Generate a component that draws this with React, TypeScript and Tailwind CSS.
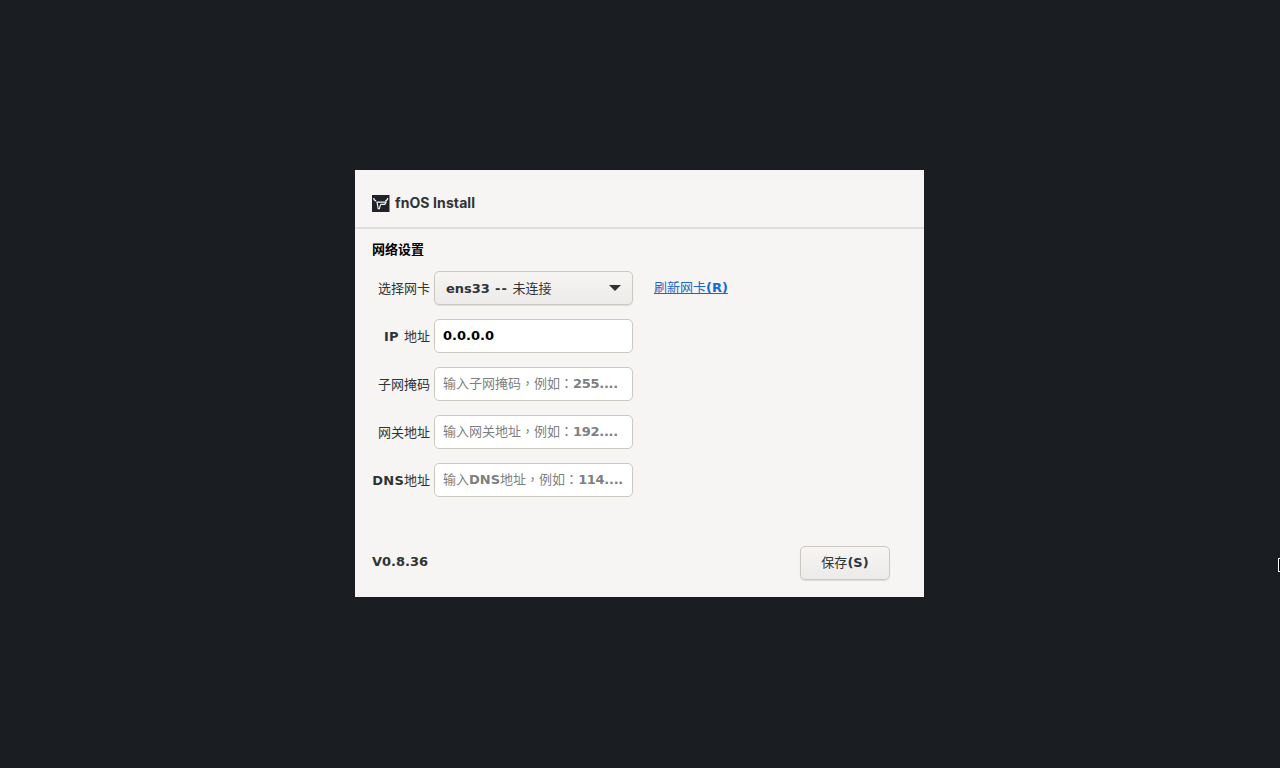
const cjk = "font-['DejaVu_Sans','Noto_Sans_CJK_SC',sans-serif]";

const fields = [
  { label: 'IP 地址', value: '0.0.0.0', placeholder: '' },
  { label: '子网掩码', value: '', placeholder: '输入子网掩码\uFF0C例如\uFF1A255....' },
  { label: '网关地址', value: '', placeholder: '输入网关地址\uFF0C例如\uFF1A192....' },
  { label: 'DNS地址', value: '', placeholder: '输入DNS地址\uFF0C例如\uFF1A114....' },
];

function Logo() {
  return (
    <svg width="18" height="17" viewBox="0 0 18 17" className="mt-[2px] shrink-0">
      <rect width="17.5" height="17" fill="#1f2329" />
      <path d="M1.6 3.2C1.9 5 2.6 5.8 4.2 5.8" fill="none" stroke="#f6f5f4" strokeWidth="1.2" />
      <path d="M15.8 3.2C15.5 5 14.8 5.8 13.2 5.8" fill="none" stroke="#f6f5f4" strokeWidth="1.2" />
      <path d="M4.6 7.2H14L12.8 9.4H8.6" fill="none" stroke="#f6f5f4" strokeWidth="1.3" />
      <path d="M5 7.2L6.2 13.6L7.4 13.6L8.6 9.4" fill="none" stroke="#f6f5f4" strokeWidth="1.1" />
    </svg>
  );
}

// the comma and colon sit centred in their cell in the reference, as in the TC font
function Placeholder({ text }: { text: string }) {
  return (
    <>
      {text.split(/([A-Z0-9.]+|[\uFF0C\uFF1A])/).map((part, i) => {
        if (part.includes('.')) return <b key={i} className="tracking-[-0.3px]">{part}</b>;
        if (/[A-Z]/.test(part)) return <b key={i}>{part}</b>;
        if (/[\uFF0C\uFF1A]/.test(part)) return <span key={i} className="font-['Noto_Sans_CJK_TC',sans-serif]">{part}</span>;
        return <span key={i}>{part}</span>;
      })}
    </>
  );
}

export default function App() {
  return (
    <div className={`relative flex h-screen items-center justify-center bg-[#1a1d21] pr-px pb-px ${cjk}`}>
      <div className="flex h-[427px] w-[569px] flex-col bg-[#f6f5f4]">
        <div className="flex h-[59px] items-center gap-[5px] border-b-2 border-[#dfdedc] pl-[17px] pt-[7px]">
          <Logo />
          <span className="pt-px font-['Inter',sans-serif] text-sm font-bold tracking-[0.1px] text-[#2e3436]">fnOS Install</span>
        </div>

        <div className="flex flex-1 flex-col pl-[17px]">
          <h2 className="mt-[12px] text-[13px] leading-[18px] font-bold text-black">网络设置</h2>

          <div className="mt-[12px] flex h-[34px] items-center">
            <span className="w-[58px] pt-px text-right text-[13px] text-[#2e3436]">选择网卡</span>
            <button className="ml-[4px] flex h-[34px] w-[199px] items-center justify-between rounded-[5px] border border-[#cdc7c2] bg-gradient-to-b from-[#f6f5f4] to-[#edebe9] pr-[11px] pl-[11px] text-[13px] text-[#2e3436] shadow-[0_1px_1px_rgba(0,0,0,0.1)]">
              <span className="pt-px [word-spacing:0.6px]"><span className="font-bold">ens33 <span className="tracking-[1px]">--</span></span> 未连接</span>
              <span className="h-0 w-0 border-x-[6px] border-t-[6px] border-x-transparent border-t-[#2e3436]" />
            </button>
            <a className="ml-[21px] text-[13px] text-[#1b6acb] underline">刷新网卡<span className="font-bold">(R)</span></a>
          </div>

          <div className="mt-[14px] flex flex-col gap-[14px]">
            {fields.map((f) => (
              <div key={f.label} className="flex h-[34px] items-center">
                <span className="w-[58px] pt-px text-right text-[13px] font-bold tracking-[0.2px] whitespace-pre text-[#2e3436] [word-spacing:0.6px]">
                  {f.label.split(/(地址|子网掩码|网关)/).map((part, i) =>
                    /[a-zA-Z]/.test(part) ? part : <span key={i} className="font-normal tracking-normal">{part}</span>
                  )}
                </span>
                <div className={`ml-[4px] flex h-[34px] w-[199px] items-center overflow-hidden rounded-[5px] border border-[#cdc7c2] bg-white px-2 text-[13px] whitespace-pre ${f.value ? 'font-bold text-black' : 'text-[#7d7f80]'}`}>
                  {f.value || <span className="pb-[2px]"><Placeholder text={f.placeholder} /></span>}
                </div>
              </div>
            ))}
          </div>

          <div className="mt-auto mb-[17px] flex items-center justify-between pr-[34px]">
            <span className="pb-[2px] text-[13px] font-bold text-[#2e3436]">V0.8.36</span>
            <button className="flex h-[34px] w-[90px] items-center justify-center rounded-[5px] border border-[#cdc7c2] bg-gradient-to-b from-[#f6f5f4] to-[#edebe9] text-[13px] text-[#2e3436] shadow-[0_1px_1px_rgba(0,0,0,0.1)]">
              保存<span className="font-bold">(S)</span>
            </button>
          </div>
        </div>
      </div>
      <div className="absolute top-[558px] left-[1278px] h-[14px] w-[2px] bg-black">
        <div className="h-full w-full border-y border-l border-white" />
      </div>
    </div>
  );
}
